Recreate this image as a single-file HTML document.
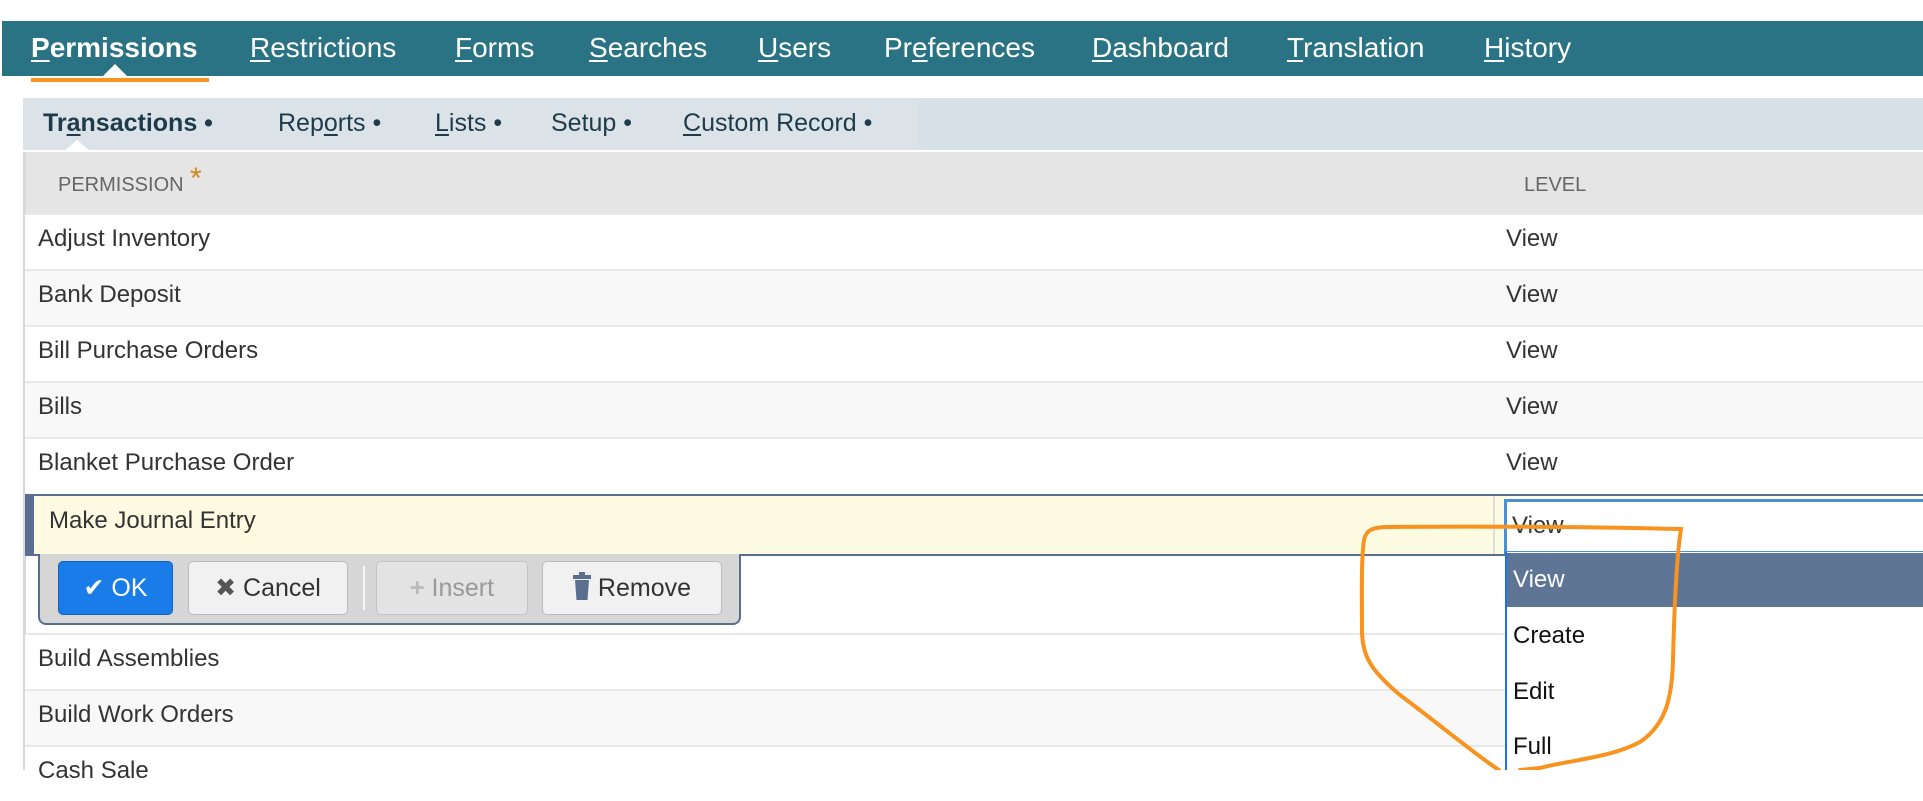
<!DOCTYPE html>
<html><head><meta charset="utf-8"><style>
*{margin:0;padding:0;box-sizing:border-box}
body{width:1923px;height:770px;overflow:hidden;background:#fff;font-family:"Liberation Sans",sans-serif;position:relative}
.abs{position:absolute}
.nav{left:2px;top:21px;width:1921px;height:55px;background:#2a7384}
.nav span{position:absolute;top:11px;color:#fff;font-size:28px;white-space:nowrap}
u{text-decoration:underline;text-decoration-thickness:2px;text-underline-offset:3px}
.sub{left:23px;top:98px;width:1900px;height:52px;background:#d5e1e6}
.sub span{position:absolute;top:11px;color:#1d3b4a;font-size:25px;white-space:nowrap}
.hdr{left:25px;top:152px;width:1898px;height:61px;background:#e5e5e5}
.row{position:absolute;left:25px;width:1898px;height:56px;border-top:2px solid #e8e8e8;font-size:24px;color:#333}
.row .a{position:absolute;left:13px;top:10px}
.row .b{position:absolute;left:1481px;top:10px}
.btn{position:absolute;top:7px;height:54px;border-radius:5px;font-size:25px;line-height:52px;text-align:center}
</style></head><body>
<div class="abs nav">
<span style="left:29px;font-weight:bold"><u>P</u>ermissions</span>
<span style="left:248px"><u>R</u>estrictions</span>
<span style="left:453px"><u>F</u>orms</span>
<span style="left:587px"><u>S</u>earches</span>
<span style="left:756px"><u>U</u>sers</span>
<span style="left:882px">Pr<u>e</u>ferences</span>
<span style="left:1090px"><u>D</u>ashboard</span>
<span style="left:1285px"><u>T</u>ranslation</span>
<span style="left:1482px"><u>H</u>istory</span>
</div>
<div class="abs" style="left:103px;top:64px;width:0;height:0;border-left:12px solid transparent;border-right:12px solid transparent;border-bottom:12px solid #fff"></div>
<div class="abs" style="left:31px;top:78px;width:178px;height:4px;background:#f7941d"></div>
<div class="abs sub">
<div class="abs" style="left:0;top:0;width:895px;height:52px;background:#dbe3e8"></div>
<span style="left:20px;font-weight:bold">Tr<u>a</u>nsactions •</span>
<span style="left:255px">Rep<u>o</u>rts •</span>
<span style="left:412px"><u>L</u>ists •</span>
<span style="left:528px">Setup •</span>
<span style="left:660px"><u>C</u>ustom Record •</span>
</div>
<div class="abs" style="left:64px;top:140px;width:0;height:0;border-left:13px solid transparent;border-right:13px solid transparent;border-bottom:11px solid #fff"></div>
<div class="abs hdr">
<span class="abs" style="left:33px;top:22px;font-size:20px;color:#666">PERMISSION</span><span class="abs" style="left:165px;top:10px;font-size:30px;color:#d4861a">*</span>
<span class="abs" style="left:1499px;top:22px;font-size:20px;color:#666">LEVEL</span>
</div>
<div class="abs" style="left:23px;top:152px;width:3px;height:618px;background:#d8d8d8"></div>
<div class="row" style="top:213px;background:#fff"><span class="a">Adjust Inventory</span><span class="b">View</span></div>
<div class="row" style="top:269px;background:#f8f8f8"><span class="a">Bank Deposit</span><span class="b">View</span></div>
<div class="row" style="top:325px;background:#fff"><span class="a">Bill Purchase Orders</span><span class="b">View</span></div>
<div class="row" style="top:381px;background:#f8f8f8"><span class="a">Bills</span><span class="b">View</span></div>
<div class="row" style="top:437px;background:#fff"><span class="a">Blanket Purchase Order</span><span class="b">View</span></div>
<div class="row" style="top:633px;background:#fff"><span class="a">Build Assemblies</span></div>
<div class="row" style="top:689px;background:#f8f8f8"><span class="a">Build Work Orders</span></div>
<div class="row" style="top:745px;background:#fff"><span class="a">Cash Sale</span></div>
<div class="abs" style="left:25px;top:494px;width:1898px;height:62px;background:#fdfbe2;border-top:2px solid #5a6f8f;border-bottom:2px solid #5a6f8f;border-left:9px solid #5a6f8f"></div>
<span class="abs" style="left:49px;top:507px;font-size:24px;color:#333">Make Journal Entry</span>
<div class="abs" style="left:1493px;top:496px;width:2px;height:58px;background:#ddd"></div>
<div class="abs" style="left:1504px;top:499px;width:419px;height:55px;background:#fff;border:3px solid #4a90d9;border-right:none"></div>
<span class="abs" style="left:1512px;top:512px;font-size:24px;color:#333">View</span>
<div class="abs" style="left:1505px;top:552px;width:418px;height:218px;background:#fff;border-left:2px solid #1a73e8"></div>
<div class="abs" style="left:1507px;top:553px;width:416px;height:54px;background:#5f7596"></div>
<span class="abs" style="left:1513px;top:566px;font-size:24px;color:#fff">View</span>
<span class="abs" style="left:1513px;top:622px;font-size:24px;color:#111">Create</span>
<span class="abs" style="left:1513px;top:678px;font-size:24px;color:#111">Edit</span>
<span class="abs" style="left:1513px;top:733px;font-size:24px;color:#111">Full</span>
<div class="abs" style="left:38px;top:554px;width:703px;height:71px;background:#d6d6d6;border:2px solid #5a6f8f;border-top:none;border-radius:0 0 8px 8px">
<div class="btn" style="left:18px;width:115px;background:#1a7ce8;border:1px solid #1560b8;color:#fff">✔ OK</div>
<div class="btn" style="left:148px;width:160px;background:#f1f1f1;border:1px solid #bbb;color:#333"><span style="color:#555">✖</span> Cancel</div>
<div class="abs" style="left:323px;top:12px;width:2px;height:44px;background:#f5f5f5"></div>
<div class="btn" style="left:336px;width:152px;background:#e3e3e3;border:1px solid #c4c4c4;color:#999"><b style="color:#bbb">+</b> Insert</div>
<div class="btn" style="left:502px;width:180px;background:#f1f1f1;border:1px solid #bbb;color:#333"><svg width="18" height="28" viewBox="0 0 18 28" style="vertical-align:-4px"><rect x="0" y="3" width="18" height="4" fill="#5a6f8f"/><rect x="6" y="0" width="6" height="4" fill="#5a6f8f"/><path d="M2 8H16L14.5 28H3.5Z" fill="#5a6f8f"/></svg> Remove</div>
</div>
<svg class="abs" style="left:0;top:0" width="1923" height="770"><path d="M1499 770 C1480 758 1440 725 1400 695 C1370 670 1362 655 1362 630 C1362 600 1361 560 1364 540 C1366 530 1372 527 1390 527 C1480 526 1600 527 1681 529 C1676 560 1674 620 1673 660 C1672 700 1665 725 1640 742 C1610 758 1570 760 1540 768 L1520 770" fill="none" stroke="#f7931e" stroke-width="4" stroke-linecap="round"/></svg>
</body></html>
